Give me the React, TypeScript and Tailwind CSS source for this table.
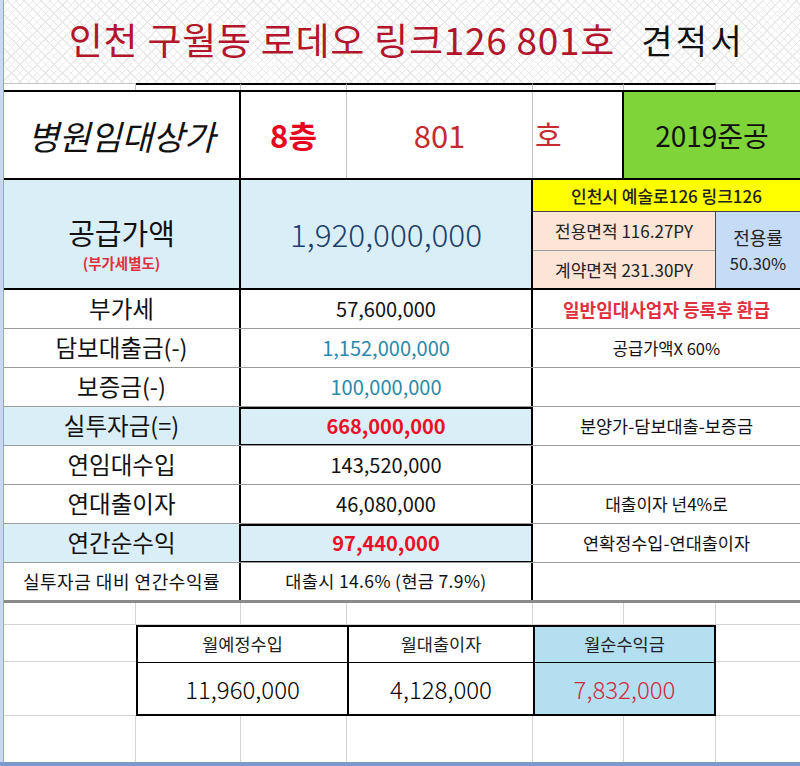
import React from "react";

const KR = "font-['Noto_Sans_CJK_KR','Noto_Sans',sans-serif]";

type Row = {
  label: string;
  value: string;
  valueClass: string;
  note?: string;
  noteClass?: string;
  hi?: boolean;
};

const rows: Row[] = [
  {
    label: "부가세",
    value: "57,600,000",
    valueClass: "text-[20px] text-[#111]",
    note: "일반임대사업자 등록후 환급",
    noteClass: "text-[18px] font-bold text-[#e0303e]",
  },
  {
    label: "담보대출금(-)",
    value: "1,152,000,000",
    valueClass: "text-[20px] text-[#2b88a8]",
    note: "공급가액X 60%",
    noteClass: "text-[16.5px] text-[#111]",
  },
  { label: "보증금(-)", value: "100,000,000", valueClass: "text-[20px] text-[#2b88a8]" },
  {
    label: "실투자금(=)",
    value: "668,000,000",
    valueClass: "text-[20px] font-bold text-[#ea0f26]",
    note: "분양가-담보대출-보증금",
    noteClass: "text-[17.5px] text-[#111]",
    hi: true,
  },
  { label: "연임대수입", value: "143,520,000", valueClass: "text-[20px] text-[#111]" },
  {
    label: "연대출이자",
    value: "46,080,000",
    valueClass: "text-[20px] text-[#111]",
    note: "대출이자 년4%로",
    noteClass: "text-[17px] text-[#111]",
  },
  {
    label: "연간순수익",
    value: "97,440,000",
    valueClass: "text-[20px] font-bold text-[#ea0f26]",
    note: "연확정수입-연대출이자",
    noteClass: "text-[17.5px] text-[#111]",
    hi: true,
  },
];

function DataRow({ r }: { r: Row }) {
  return (
    <div className="flex h-[39px] border-b border-[#9c9c9c]">
      <div
        className={`w-[237px] flex items-center justify-center border-r-2 border-black text-[23.5px] text-[#111] ${
          r.hi ? "bg-[#daeef8]" : ""
        }`}
      >
        {r.label}
      </div>
      <div
        className={`w-[292px] flex items-center justify-center border-r-2 border-black ${
          r.hi ? "bg-[#daeef8] shadow-[inset_0_2px_0_#000,inset_0_-1px_0_#000]" : ""
        }`}
      >
        <span className={r.valueClass}>{r.value}</span>
      </div>
      <div className="flex-1 flex items-center justify-center">
        {r.note && <span className={r.noteClass}>{r.note}</span>}
      </div>
    </div>
  );
}

export default function App() {
  return (
    <div className={`w-[800px] h-[766px] bg-white flex flex-col overflow-hidden ${KR}`}>
      <div className="flex flex-1">
        <div className="w-[4px] bg-[#c9d8f0] border-r border-[#8ea8d6]" />
        <div className="flex-1 flex flex-col">
          {/* Title */}
          <div className="h-[83px] flex items-center justify-center gap-[26px] pl-[10px] pb-[4px] bg-[image:repeating-linear-gradient(45deg,#e9e9e9_0_1px,transparent_1px_6px),repeating-linear-gradient(-45deg,#e9e9e9_0_1px,transparent_1px_6px)]">
            <span className="text-[37px] text-[#b3152c] tracking-[0.02em]">
              인천 구월동 로데오 링크126 801호
            </span>
            <span className="text-[34px] text-[#111] tracking-[0.1em]">견적서</span>
          </div>

          {/* strip under title */}
          <div className="h-[7px] grid grid-cols-[132px_105px_106px_186px_91px_92px_84px]">
            <div className="border-t border-r border-[#c4c4c4]" />
            <div className="border-t-2 border-t-black border-r border-r-[#c4c4c4]" />
            <div className="border-t-2 border-t-black border-r border-r-[#c4c4c4]" />
            <div className="border-t-2 border-t-black border-r border-r-[#c4c4c4]" />
            <div className="border-t-2 border-t-black border-r border-r-[#c4c4c4]" />
            <div className="border-t-2 border-t-black border-r border-r-[#c4c4c4]" />
            <div className="border-t border-[#c4c4c4]" />
          </div>

          {/* Row 1 */}
          <div className="h-[90px] flex border-t-2 border-b-2 border-black">
            <div className="w-[237px] flex items-center justify-center border-r-2 border-black">
              <span className="text-[34px] italic text-[#111]">병원임대상가</span>
            </div>
            <div className="w-[106px] flex items-center justify-center border-r border-[#c4c4c4]">
              <span className="text-[31px] font-bold text-[#e8051e]">8층</span>
            </div>
            <div className="w-[186px] flex items-center justify-center border-r border-[#c4c4c4]">
              <span className="text-[31px] text-[#c42a30]">801</span>
            </div>
            <div className="w-[91px] flex items-center pl-[2px] border-r-2 border-black">
              <span className="text-[29px] text-[#c42a30]">호</span>
            </div>
            <div className="flex-1 flex items-center justify-center bg-[#7fd43a]">
              <span className="text-[28px] text-[#111]">2019준공</span>
            </div>
          </div>

          {/* Row 2 */}
          <div className="h-[110px] flex border-b-2 border-black">
            <div className="w-[237px] flex flex-col items-center pt-[36px] bg-[#daeef8] border-r-2 border-black">
              <span className="text-[29px] leading-[32px] text-[#111]">공급가액</span>
              <span className="mt-[7px] text-[14.5px] leading-[16px] font-bold text-[#e0303e]">
                (부가세별도)
              </span>
            </div>
            <div className="w-[292px] flex items-center justify-center bg-[#daeef8] border-r-2 border-black">
              <span className="text-[31.5px] font-light text-[#1a3f6b]">1,920,000,000</span>
            </div>
            <div className="flex-1 flex flex-col">
              <div className="h-[32px] flex items-center justify-center bg-[#ffff00] border-b border-[#444]">
                <span className="text-[17px] font-medium text-[#222]">인천시 예술로126 링크126</span>
              </div>
              <div className="flex-1 flex">
                <div className="w-[183px] flex flex-col border-r border-[#444]">
                  <div className="flex-1 flex items-center justify-center bg-[#fce4d6] border-b border-[#9c9c9c]">
                    <span className="text-[17px] text-[#222]">전용면적 116.27PY</span>
                  </div>
                  <div className="flex-1 flex items-center justify-center bg-[#fce4d6]">
                    <span className="text-[17px] text-[#222]">계약면적 231.30PY</span>
                  </div>
                </div>
                <div className="flex-1 flex flex-col items-center justify-center bg-[#c6dbf5] leading-[26px]">
                  <span className="text-[18px] text-[#222]">전용률</span>
                  <span className="text-[16.5px] text-[#222]">50.30%</span>
                </div>
              </div>
            </div>
          </div>

          {rows.map((r) => (
            <DataRow key={r.label} r={r} />
          ))}

          {/* last row */}
          <div className="h-[37px] flex">
            <div className="w-[237px] flex items-center justify-center border-r-2 border-black">
              <span className="text-[18px] tracking-[0.03em] text-[#111]">실투자금 대비 연간수익률</span>
            </div>
            <div className="w-[292px] flex items-center justify-center border-r-2 border-black">
              <span className="text-[17.5px] tracking-[0.02em] text-[#111]">대출시 14.6% (현금 7.9%)</span>
            </div>
            <div className="flex-1" />
          </div>

          <div className="h-[3px] bg-[#8a8a8a]" />

          {/* Bottom sheet area */}
          <div className="h-[159px] grid grid-cols-[132px_105px_106px_186px_91px_92px_84px] grid-rows-[22px_37px_54px_46px]">
            <div className="border-r border-b border-[#d4d4d4]" />
            <div className="border-r border-b border-[#d4d4d4]" />
            <div className="border-r border-b border-[#d4d4d4]" />
            <div className="border-r border-b border-[#d4d4d4]" />
            <div className="border-r border-b border-[#d4d4d4]" />
            <div className="border-r border-b border-[#d4d4d4]" />
            <div className="border-b border-[#d4d4d4]" />

            <div className="border-b border-[#d4d4d4]" />
            <div className="col-span-2 flex items-center justify-center border-t-2 border-l-2 border-black">
              <span className="text-[17.5px] text-[#222]">월예정수입</span>
            </div>
            <div className="flex items-center justify-center border-t-2 border-l-2 border-black">
              <span className="text-[17.5px] text-[#222]">월대출이자</span>
            </div>
            <div className="col-span-2 flex items-center justify-center bg-[#b3dff0] border-t-2 border-x-2 border-black">
              <span className="text-[17.5px] text-[#222]">월순수익금</span>
            </div>
            <div className="border-b border-[#d4d4d4]" />

            <div className="border-b border-[#d4d4d4]" />
            <div className="col-span-2 flex items-center justify-center border-t border-l-2 border-b-2 border-black">
              <span className="text-[24px] font-light text-[#000]">11,960,000</span>
            </div>
            <div className="flex items-center justify-center border-t border-l-2 border-b-2 border-black">
              <span className="text-[24px] font-light text-[#000]">4,128,000</span>
            </div>
            <div className="col-span-2 flex items-center justify-center bg-[#b3dff0] border-t border-x-2 border-b-2 border-black">
              <span className="text-[24px] font-light text-[#d42a3c]">7,832,000</span>
            </div>
            <div className="border-b border-[#d4d4d4]" />

            <div className="border-r border-[#d4d4d4]" />
            <div className="border-r border-[#d4d4d4]" />
            <div className="border-r border-[#d4d4d4]" />
            <div className="border-r border-[#d4d4d4]" />
            <div className="border-r border-[#d4d4d4]" />
            <div className="border-r border-[#d4d4d4]" />
            <div />
          </div>
        </div>
      </div>
      <div className="h-[4px] bg-[#7c98cc]" />
    </div>
  );
}
